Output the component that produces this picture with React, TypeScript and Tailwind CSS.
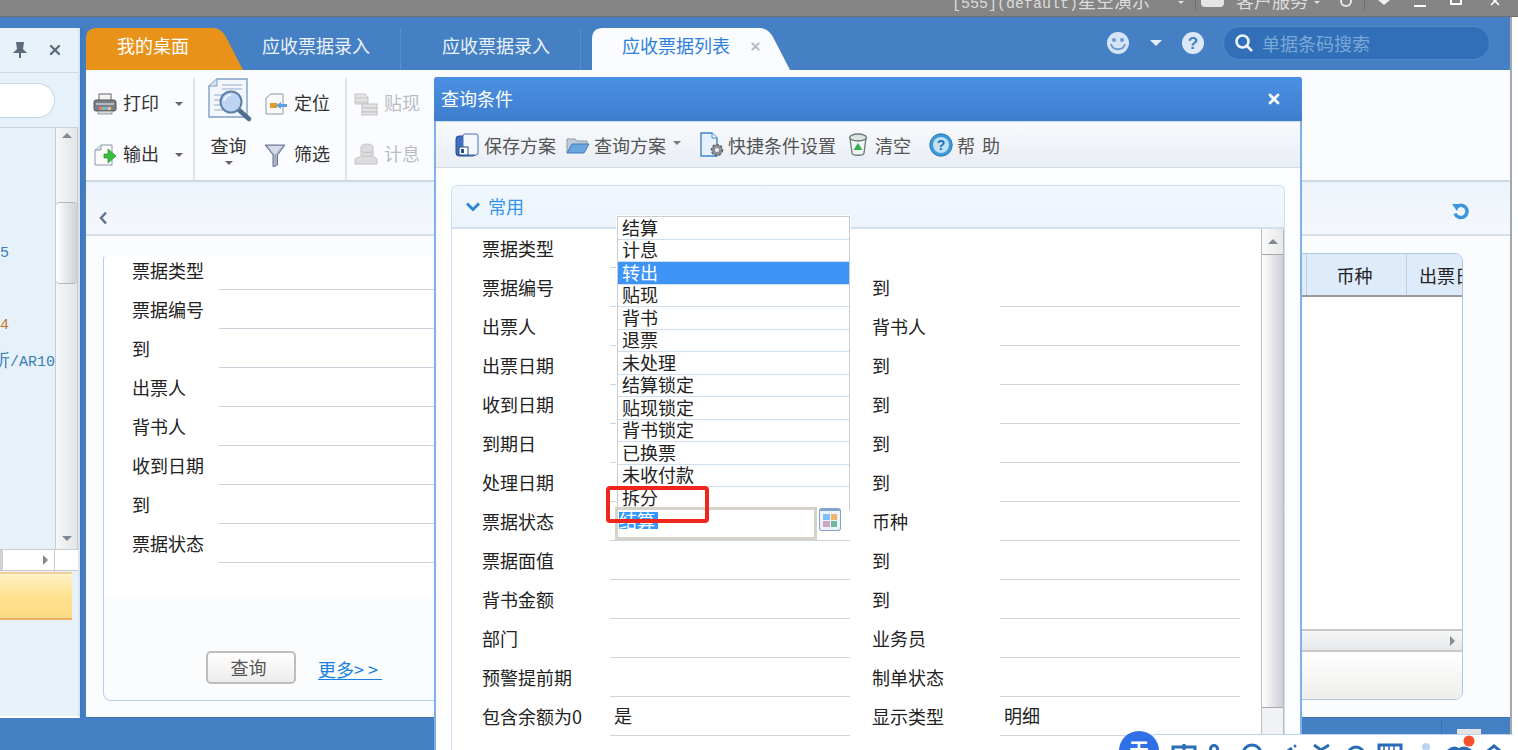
import { X } from "lucide-react"

const formRows = ["票据类型", "票据编号", "到", "出票人", "背书人", "收到日期", "到", "票据状态"]

const dialogRows = [
  { left: "票据类型" },
  { left: "票据编号", right: "到" },
  { left: "出票人", right: "背书人" },
  { left: "出票日期", right: "到" },
  { left: "收到日期", right: "到" },
  { left: "到期日", right: "到" },
  { left: "处理日期", right: "到" },
  { left: "票据状态", right: "币种" },
  { left: "票据面值", right: "到" },
  { left: "背书金额", right: "到" },
  { left: "部门", right: "业务员" },
  { left: "预警提前期", right: "制单状态" },
  { left: "包含余额为0", leftValue: "是", right: "显示类型", rightValue: "明细" },
]

const statusOptions = ["结算", "计息", "转出", "贴现", "背书", "退票", "未处理", "结算锁定", "贴现锁定", "背书锁定", "已换票", "未收付款", "拆分"]

function Caret({ className = "" }: { className?: string }) {
  return <span className={`inline-block w-0 h-0 border-x-[4px] border-x-transparent border-t-[4px] border-t-[#666] ${className}`} />
}

function PrintIcon() {
  return (
    <svg width="24" height="24" viewBox="0 0 24 24">
      <rect x="6" y="2" width="12" height="7" fill="#f4f4f4" stroke="#666" />
      <rect x="1" y="8" width="22" height="11" rx="2" fill="#7b7f86" stroke="#555" />
      <rect x="3" y="11" width="18" height="2" fill="#b6bac0" />
      <rect x="6" y="15" width="3" height="3" fill="#e57f7f" />
      <rect x="9" y="15" width="3" height="3" fill="#7fc48a" />
      <rect x="12" y="15" width="3" height="3" fill="#7fa9e5" />
      <rect x="15" y="15" width="3" height="3" fill="#e5c97f" />
      <rect x="5" y="19" width="14" height="3" fill="#d8dade" stroke="#666" strokeWidth=".6" />
    </svg>
  )
}

function ExportIcon() {
  return (
    <svg width="24" height="24" viewBox="0 0 24 24">
      <path d="M2 22V7l6-5h11v20z" fill="#fbfbfb" stroke="#8a98a8" />
      <path d="M2 7h6V2" fill="#dde5ee" stroke="#8a98a8" />
      <path d="M11 10h4V5l8 7-8 7v-5h-4z" transform="translate(0 1)" fill="#39c03c" stroke="#1f8f28" strokeWidth=".7" />
    </svg>
  )
}

function QueryIcon() {
  return (
    <svg width="46" height="46" viewBox="0 0 46 46">
      <path d="M1 40V9L9 2h30v38z" fill="#f3f7fc" stroke="#7f9fc5" strokeWidth="1.4" />
      <path d="M1 9h8V2" fill="#d6e3f2" stroke="#7f9fc5" />
      <path d="M14 8h20M14 12h20M6 18h10M6 23h8M6 28h8M6 33h10" stroke="#b3c6dc" strokeWidth="1.4" />
      <path d="M31 33l10 9" stroke="#4f6d92" strokeWidth="4.5" strokeLinecap="round" />
      <circle cx="23" cy="25" r="10.5" fill="#bcd3f2" stroke="#5f7fa6" strokeWidth="2" />
      <path d="M16 24a7 7 0 0 1 7-6" stroke="#f3f8ff" strokeWidth="2" fill="none" />
    </svg>
  )
}

function LocateIcon() {
  return (
    <svg width="24" height="24" viewBox="0 0 24 24">
      <path d="M2 22V6l5-4h12v20z" fill="#f7f9fb" stroke="#8c99a8" />
      <rect x="6" y="11" width="7" height="5" fill="#e09a2b" />
      <path d="M12 13.5l5-3.5v2h6v3h-6v2z" fill="#5b9fe0" />
    </svg>
  )
}

function FilterIcon() {
  return (
    <svg width="24" height="24" viewBox="0 0 24 24">
      <path d="M1 2h20L13.5 12v10L9 24V12z" fill="#a9b1c7" stroke="#6a7492" />
      <path d="M4 3h14l-6 8h-2z" fill="#d8dce8" />
    </svg>
  )
}

function DiscountIcon() {
  return (
    <svg width="24" height="24" viewBox="0 0 24 24" fill="#e4e4e4" stroke="#c2c2c2">
      <path d="M1 2h10l3 3v7H1z" />
      <path d="M1 6h13M1 10h13" />
      <rect x="8" y="12" width="15" height="4" />
      <rect x="8" y="16" width="15" height="4" />
      <rect x="8" y="20" width="15" height="3" />
    </svg>
  )
}

function InterestIcon() {
  return (
    <svg width="24" height="24" viewBox="0 0 24 24" fill="#dcdcdc" stroke="#c4c4c4">
      <ellipse cx="13" cy="4" rx="6" ry="3" />
      <path d="M7 4v8c0 2 12 2 12 0V4" />
      <path d="M7 8c0 2 12 2 12 0" fill="none" />
      <path d="M1 16l6-3h12l4 3v5H1z" />
    </svg>
  )
}

function SaveIcon() {
  return (
    <svg width="24" height="24" viewBox="0 0 24 24">
      <rect x="1" y="3" width="20" height="20" rx="3" fill="#3f6fc0" stroke="#294c8c" />
      <rect x="8" y="1" width="15" height="21" rx="2" fill="#f3f6fb" stroke="#4b72b5" />
      <rect x="4" y="14" width="9" height="8" fill="#fff" stroke="#294c8c" />
      <rect x="6" y="16" width="3" height="4" fill="#294c8c" />
    </svg>
  )
}

function FolderIcon() {
  return (
    <svg width="24" height="24" viewBox="0 0 24 24">
      <path d="M1 20V6h8l2 2h10v4H6L1 20z" fill="#c4ccd6" stroke="#8b97a5" />
      <path d="M1 20l5-9h17l-5 9z" fill="#6ba5df" stroke="#3e79b8" />
    </svg>
  )
}

function ShortcutIcon() {
  return (
    <svg width="26" height="26" viewBox="0 0 26 26">
      <path d="M2 24V1h11l5 5v18z" fill="#e6f1fb" stroke="#3f86c6" strokeWidth="1.4" />
      <path d="M13 1v5h5" fill="#fff" stroke="#3f86c6" />
      <circle cx="18" cy="18" r="5.5" fill="#8a8f96" stroke="#60656c" strokeWidth="1.6" strokeDasharray="2.5 1.6" />
      <circle cx="18" cy="18" r="2" fill="#eef1f4" />
    </svg>
  )
}

function ClearIcon() {
  return (
    <svg width="20" height="24" viewBox="0 0 20 24">
      <path d="M2 5l2 15c0 3 12 3 12 0l2-15" fill="#f1f5f3" stroke="#6a7a7a" strokeWidth="1.3" />
      <ellipse cx="10" cy="4.5" rx="8.5" ry="3.5" fill="#dfe5e3" stroke="#6a7a7a" strokeWidth="1.3" />
      <path d="M10 10l4.500 7h-9z" fill="#36b04a" />
    </svg>
  )
}

function HelpIcon() {
  return (
    <svg width="24" height="24" viewBox="0 0 24 24">
      <circle cx="12" cy="12" r="11.200" fill="#3f9ada" stroke="#2678b8" />
      <circle cx="12" cy="12" r="8" fill="#bfe0f5" />
      <text x="12" y="17" textAnchor="middle" fontSize="14" fontWeight="700" fill="#1f70b0" fontFamily="Liberation Sans">?</text>
    </svg>
  )
}

function PinIcon() {
  return (
    <svg width="18" height="18" viewBox="0 0 18 18" fill="#5b6b7c">
      <path d="M5 1h8l-1 7 4 4H2l4-4z" />
      <rect x="8" y="12" width="2" height="5" />
    </svg>
  )
}

function TabShape({ fill, width }: { fill: string; width: number }) {
  return (
    <svg className="absolute inset-0" width={width} height="42" viewBox={`0 0 ${width} 42`}>
      <path d={`M0 42V11Q0 0 11 0H${width - 30}Q${width - 22} 0 ${width - 17} 9L${width} 42Z`} fill={fill} />
    </svg>
  )
}

function ToolItem({ icon, label, muted, caret }: { icon: React.ReactNode; label: string; muted?: boolean; caret?: boolean }) {
  return (
    <div className="flex items-center h-[51px]">
      <span className="w-6 h-6 flex items-center justify-center shrink-0">{icon}</span>
      <span className={`ml-[6px] -mt-[4px] ${muted ? "text-[#b9bdc2]" : "text-[#333]"}`}>{label}</span>
      {caret && <Caret className="ml-4" />}
    </div>
  )
}

function DialogTool({
  icon,
  label,
  labelClass,
  caret,
}: {
  icon: React.ReactNode
  label: string
  labelClass: string
  caret?: boolean
}) {
  return (
    <div className="flex items-center text-[#555] shrink-0">
      {icon}
      <span className={labelClass}>{label}</span>
      {caret && <Caret className="ml-[7px] mb-1 border-t-[#777]" />}
    </div>
  )
}

function ScrollArrow({ dir, className = "" }: { dir: "up" | "down" | "right"; className?: string }) {
  if (dir === "up") return <span className={`w-0 h-0 border-x-[5px] border-x-transparent border-b-[5px] border-b-[#7e8a96] ${className}`} />
  if (dir === "down") return <span className={`w-0 h-0 border-x-[5px] border-x-transparent border-t-[5px] border-t-[#7e8a96] ${className}`} />
  return <span className={`w-0 h-0 border-y-[5px] border-y-transparent border-l-[5px] border-l-[#7e8a96] ${className}`} />
}

function LeftPanel() {
  return (
    <aside className="w-[80px] shrink-0 flex flex-col bg-[#e6f1fa] border-r-2 border-r-[#dfe3e8] border-b-2 border-b-white overflow-hidden">
      <div className="h-[45px] flex items-center border-b border-[#c9d9e8] shrink-0">
        <span className="ml-[11px]"><PinIcon /></span>
        <X size={16} strokeWidth={3.5} className="ml-[18px] text-[#5d6b78]" />
      </div>
      <div className="h-[55px] shrink-0 border-b border-[#c3d2e0] pt-[10px]">
        <div className="w-[55px] h-[35px] bg-white rounded-r-full border border-l-0 border-[#c4d8ec]" />
      </div>
      <div className="h-[421px] shrink-0 flex">
        <div className="w-[55px] overflow-hidden text-[15px] leading-[22px] font-['Liberation_Mono',monospace] text-[#3a7db8] pt-[115px]">
          <div>5</div>
          <div className="mt-[50px] text-[#c9772a]">4</div>
          <div className="mt-[13px] whitespace-nowrap -ml-[8px]"><span className="text-[18px]">析</span>/AR10</div>
        </div>
        <div className="w-[23px] flex flex-col items-center bg-gradient-to-r from-[#f5f6f7] to-[#e4e5e7] border-x border-[#c9cccf]">
          <div className="h-[74px] w-full">
            <ScrollArrow dir="up" className="block mx-auto mt-[5px]" />
          </div>
          <div className="h-[82px] w-full bg-gradient-to-r from-white to-[#cfd1d8] border-y border-[#b5b7bb] rounded-sm" />
          <div className="flex-1" />
          <ScrollArrow dir="down" className="mb-[8px]" />
        </div>
      </div>
      <div className="h-[22px] shrink-0 flex border-y border-[#c9cccf] bg-white">
        <div className="w-[3px] bg-[#d0d2d6]" />
        <div className="w-[52px] flex items-center justify-end pr-[6px] border-r border-[#c9cccf]">
          <ScrollArrow dir="right" />
        </div>
      </div>
      <div className="h-[48px] w-[72px] shrink-0 mt-[1px] bg-gradient-to-b from-[#fff3c8] via-[#ffe18e] to-[#fbdc85] border-y-2 border-t-[#f6cf96] border-b-[#efb366]" />
    </aside>
  )
}

function QueryCard() {
  return (
    <div className="w-[347px] h-[446px] shrink-0 rounded-bl-lg rounded-tl border border-r-0 border-[#b5d0ec] border-t-transparent bg-[#fbfcfe] overflow-hidden">
      <div className="bg-white pl-[28px] h-[345px] -mt-[5px]">
        {formRows.map((label, i) => (
          <div key={i} className="flex h-[39px] text-[#222]">
            <span className="w-[87px] shrink-0 flex items-center pb-[2px]">{label}</span>
            <div className="flex-1 border-b border-[#c9d1da]" />
          </div>
        ))}
      </div>
      <div className="flex items-center mt-[55px] ml-[102px]">
        <button className="w-[90px] h-[33px] rounded-[5px] border-2 border-[#bdbdbd] bg-gradient-to-b from-white to-[#ececec] text-[#555] pb-[2px] pr-[5px]">查询</button>
        <a className="ml-[22px] mt-[2px] text-[#1a80e0] underline underline-offset-2">
          更多<span className="tracking-[4px]">&gt;&gt;</span>
        </a>
      </div>
    </div>
  )
}

function GridPanel() {
  return (
    <div className="flex-1 h-[447px] -mt-[2px] ml-[2px] flex flex-col rounded-r-lg border border-[#a9c8e8] overflow-hidden">
      <div className="h-[43px] shrink-0 flex justify-end bg-[#deebfa] border-b-2 border-b-[#9a9a9a] text-[#222]">
        <div className="w-[100px] flex items-center justify-center pr-[4px] border-l border-[#bfcfe0]">币种</div>
        <div className="w-[56px] flex items-center pl-[12px] border-l border-[#bfcfe0] whitespace-nowrap overflow-hidden">出票日期</div>
      </div>
      <div className="flex-1 bg-white" />
      <div className="h-[23px] shrink-0 flex items-center justify-end pr-[7px] bg-gradient-to-b from-[#f6f6f6] to-[#e6e8ea] border-y-2 border-[#c8c8c8]">
        <ScrollArrow dir="right" />
      </div>
      <div className="h-[47px] shrink-0 bg-gradient-to-b from-white to-[#eeeeec]" />
    </div>
  )
}

function MainToolbar() {
  return (
    <div className="h-[112px] shrink-0 flex bg-[#fafcff] border-b-2 border-[#cbd8e5] pt-[8px]">
      <div className="w-[109px] shrink-0 pl-[7px] border-r-2 border-[#dfe4ea] h-[102px]">
        <ToolItem icon={<PrintIcon />} label="打印" caret />
        <ToolItem icon={<ExportIcon />} label="输出" caret />
      </div>
      <div className="w-[69px] shrink-0 flex flex-col items-center -mt-px">
        <span className="ml-[3px]"><QueryIcon /></span>
        <span className="mt-[11px] mr-[2px] text-[#333] leading-[22px]">查询</span>
        <Caret className="mt-[5px] mr-[2px]" />
      </div>
      <div className="w-[83px] shrink-0 border-r-2 border-[#dfe4ea] h-[102px]">
        <ToolItem icon={<LocateIcon />} label="定位" />
        <ToolItem icon={<FilterIcon />} label="筛选" />
      </div>
      <div className="pl-[7px]">
        <ToolItem icon={<DiscountIcon />} label="贴现" muted />
        <ToolItem icon={<InterestIcon />} label="计息" muted />
      </div>
    </div>
  )
}

function QueryDialog() {
  const selected = "转出"
  return (
    <div className="absolute left-[434px] top-[77px] w-[868px] h-[700px] flex flex-col rounded-t-[3px] border-2 border-t-0 border-[#7fb0e8] bg-[#fbfdff]">
      <div className="h-[44px] shrink-0 -mx-[2px] rounded-t-[3px] flex items-center justify-between px-[7px] bg-gradient-to-b from-[#4a90e2] to-[#3e7ecf] text-white">
        <span className="pb-[2px]">查询条件</span>
        <X size={16} strokeWidth={4} className="mr-[13px]" />
      </div>
      <div className="h-[47px] shrink-0 flex items-center pl-[19px] bg-gradient-to-b from-[#f8fafc] to-[#e9eef5] border-y border-y-[#cfdbe8]">
        <DialogTool icon={<SaveIcon />} label="保存方案" labelClass="ml-[5px]" />
        <div className="w-[10px]" />
        <DialogTool icon={<FolderIcon />} label="查询方案" labelClass="ml-[4px]" caret />
        <div className="w-[18px]" />
        <DialogTool icon={<ShortcutIcon />} label="快捷条件设置" labelClass="ml-[3px]" />
        <div className="w-[12px]" />
        <DialogTool icon={<ClearIcon />} label="清空" labelClass="ml-[7px]" />
        <div className="w-[18px]" />
        <DialogTool icon={<HelpIcon />} label="帮 助" labelClass="ml-[4px] [word-spacing:3px]" />
      </div>

      <div className="mt-[17px] mx-[15px] flex-1 flex flex-col rounded-t-md border border-b-0 border-[#cfdeec]">
        <div className="h-[43px] shrink-0 flex items-center pl-[14px] bg-gradient-to-b from-[#f1f7fe] to-[#edf4fb] border-b-2 border-[#d3dfea] rounded-t-md">
          <svg width="14" height="10" viewBox="0 0 14 10"><path d="M1 1.500l6 6 6-6" fill="none" stroke="#2f86d8" strokeWidth="3" /></svg>
          <span className="ml-[8px] pb-[2px] text-[#3595ea]">常用</span>
        </div>
        <div className="flex-1 flex bg-white">
          <div className="flex-1 pl-[30px] pr-[20px]">
            {dialogRows.map((row, i) => (
              <div key={i} className="flex h-[39px] text-[#222]">
                <span className="w-[128px] shrink-0 flex items-center pb-[2px] whitespace-nowrap">{row.left}</span>
                <div className="w-[240px] shrink-0 flex items-center pl-[4px] pb-[2px] border-b border-[#cdd5dd]">{row.leftValue}</div>
                {row.right && <span className="w-[22px] shrink-0 ml-[22px] flex items-center pb-[2px] whitespace-nowrap">{row.right}</span>}
                {row.right && <div className="w-[240px] shrink-0 flex items-center pl-[4px] pb-[2px] ml-[106px] border-b border-[#cdd5dd]">{row.rightValue}</div>}
              </div>
            ))}
          </div>
          <div className="w-[23px] shrink-0 flex flex-col bg-[#f0f2f4] border-x border-[#b9bdc2]">
            <div className="h-[25px] flex items-center justify-center bg-gradient-to-r from-[#fbfbfb] to-[#e6e7ea]">
              <ScrollArrow dir="up" />
            </div>
            <div className="h-[454px] bg-gradient-to-r from-white to-[#cdced6] border-y border-[#a8a8a8]" />
          </div>
        </div>
      </div>

      {/* dropdown list over the form */}
      <div className="absolute left-[181px] top-[139px] w-[233px] bg-white border border-[#c9ccd0] border-b-0 shadow-[0_0_0_1px_#fff]">
        {statusOptions.map((opt, i) => (
          <div
            key={opt}
            className={`h-[22.5px] flex items-center pl-[4px] pb-[2px] leading-none ${
              i < statusOptions.length - 1 ? "border-b border-[#cfdfee]" : ""
            } ${opt === selected ? "bg-[#3e94f5] text-white" : "text-[#222]"}`}
          >
            {opt}
          </div>
        ))}
      </div>

      {/* status input being edited */}
      <div className="absolute left-[179px] top-[430px] flex">
        <div className="w-[202px] h-[33px] bg-white border-[3px] border-[#d6d2c8] pl-[1px] pt-[2px] overflow-hidden">
          <span className="block w-[39px] h-[17px] leading-[17px] overflow-hidden bg-[#3399ff] text-white">结算</span>
        </div>
        <div className="ml-[2px] mt-px w-[22px] h-[23px] rounded-[3px] border border-[#7fa3cc] border-t-[3px] bg-[#eef3f9] grid grid-cols-2 gap-px p-[3px]">
          <span className="bg-[#7cc0f5]" />
          <span className="bg-[#f2b36b]" />
          <span className="bg-[#cfa5c0]" />
          <span className="bg-[#6fb9a0]" />
        </div>
      </div>

      {/* red highlight from the annotated screenshot */}
      <div className="absolute left-[170px] top-[409px] w-[103px] h-[37px] border-4 border-[#f0261c] rounded-[4px]" />
    </div>
  )
}

function Tray() {
  return (
    <div className="absolute left-[1119px] top-[731px] w-[394px] h-[19px] overflow-hidden">
      <div className="absolute left-[34px] top-[3px] right-0 bottom-0 bg-white border-t border-[#bcd4ee]" />
      <div className="absolute left-0 top-0 w-[40px] h-[40px] rounded-full bg-[#2f6fe8] flex justify-center text-white text-[20px] font-bold leading-[38px]">
        天
      </div>
      <svg className="absolute left-[40px] top-[2px]" width="354" height="17" viewBox="0 0 354 17" fill="none" stroke="#2a6cb8" strokeWidth="3">
        <path d="M25 11v6M14 17V14h22v3" />
        <circle cx="55" cy="16" r="3.500" />
        <circle cx="93" cy="21" r="9" />
        <path d="M126 20l7-5" />
        <circle cx="136" cy="13" r="1.500" fill="#2a6cb8" stroke="none" />
        <path d="M155 12l7 5 8-5" />
        <circle cx="197" cy="22" r="8" />
        <rect x="220" y="12" width="22" height="10" fill="#fff" />
        <path d="M225 12v5M230 12v5M235 12v5" strokeWidth="1.500" />
        <circle cx="267" cy="14" r="4" fill="#bcd4f5" stroke="none" />
        <path d="M288 17q6-6 12-2q6-4 13 2v3h-25z" fill="#2a6cb8" stroke="none" />
        <circle cx="310" cy="8" r="5.500" fill="#f5502b" stroke="none" />
        <path d="M325 21l10-8 10 8" />
      </svg>
    </div>
  )
}

export default function App() {
  return (
    <div className="relative w-[1518px] h-[750px] overflow-hidden flex flex-col bg-white font-['Noto_Sans_CJK_SC','Liberation_Sans',sans-serif] text-[18px] leading-none">
      <div className="h-[17px] shrink-0 bg-[#858585] border-b border-[#6f6f6f] relative overflow-hidden flex justify-end text-[#dcdcdc] font-['Liberation_Mono','Noto_Sans_CJK_SC',monospace]">
        <div className="flex items-center h-[5px] mr-[16px] text-[15px]">
          <span className="whitespace-nowrap">[555](default)<span className="text-[18px]">星空演示</span></span>
          <span className="ml-[28px] w-0 h-0 border-x-[3px] border-x-transparent border-t-[3px] border-t-[#ddd]" />
          <span className="ml-[11px] h-[16px] border-l border-[#6f6f6f]" />
          <span className="ml-[5px] w-[23px] h-[8px] bg-[#e5e5e5] rounded-b" />
          <span className="ml-[12px] text-[18px] whitespace-nowrap">客户服务</span>
          <span className="ml-[6px] w-0 h-0 border-x-[3px] border-x-transparent border-t-[3px] border-t-[#ddd]" />
          <span className="ml-[20px] w-[12px] h-[8px] border-2 border-t-0 border-[#e5e5e5] rounded-b-full" />
          <span className="ml-[12px] h-[16px] border-l border-[#6f6f6f]" />
          <span className="ml-[13px] w-0 h-0 border-x-[6px] border-x-transparent border-t-[5px] border-t-[#eee]" />
          <span className="ml-[24px] mt-[6px] w-[12px] h-[2px] bg-white" />
          <span className="ml-[24px] w-[12px] h-[5px] border-2 border-t-0 border-white" />
          <X size={14} strokeWidth={3} className="ml-[26px] -mt-[4px] text-white" />
        </div>
      </div>

      <div className="flex-1 flex min-h-0">
        <div className="w-[1510px] shrink-0 flex pt-[11px] pb-[32px] bg-[#4580c4]">
          <LeftPanel />
          <div className="w-[6px] shrink-0 bg-gradient-to-r from-[#3b78bf] to-[#4580c4]" />
          <div className="flex-1 flex flex-col min-w-0">
            <div className="h-[42px] shrink-0 flex relative">
              <div className="relative w-[157px] shrink-0 pl-[31px] pt-[8px] text-white">
                <TabShape fill="#e8921a" width={157} />
                <span className="relative">我的桌面</span>
              </div>
              <div className="w-[158px] shrink-0 pl-[19px] pt-[8px] text-[#eaf2fb] border-r border-[#5a90cf]">应收票据录入</div>
              <div className="w-[180px] shrink-0 pl-[41px] pt-[8px] text-[#eaf2fb] border-r border-[#5a90cf]">应收票据录入</div>
              <div className="relative w-[198px] ml-[11px] shrink-0 pl-[30px] pt-[8px] text-[#2f80d8] flex">
                <TabShape fill="#fafcff" width={198} />
                <span className="relative">应收票据列表</span>
                <X size={13} strokeWidth={3.500} className="relative ml-[19px] mt-[4px] text-[#b4bcc6]" />
              </div>
              <div className="ml-auto mr-[20px] -mt-[2px] h-[34px] self-start flex items-center">
                <svg width="24" height="24" viewBox="0 0 24 24">
                  <circle cx="12" cy="12" r="11" fill="#d6e4f7" />
                  <circle cx="8" cy="9" r="2" fill="#6f9ad0" />
                  <circle cx="16" cy="9" r="2" fill="#6f9ad0" />
                  <path d="M5 13c2 7 12 7 14 0" fill="none" stroke="#6f9ad0" strokeWidth="1.800" />
                </svg>
                <span className="ml-[20px] w-0 h-0 border-x-[6px] border-x-transparent border-t-[6px] border-t-[#e4edf8]" />
                <svg className="ml-[19px]" width="24" height="24" viewBox="0 0 24 24">
                  <circle cx="12" cy="12" r="11" fill="#dce8f8" />
                  <text x="12" y="18" textAnchor="middle" fontSize="17" fontWeight="700" fill="#4580c4" fontFamily="Liberation Sans">?</text>
                </svg>
                <div className="ml-[18px] w-[267px] h-[34px] rounded-full bg-[#3170b8] border border-[#4d88ca] flex items-center pl-[10px] text-[#7ba7d8]">
                  <svg width="20" height="20" viewBox="0 0 20 20" fill="none" stroke="#f0f5fb" strokeWidth="2.500">
                    <circle cx="8.500" cy="8.500" r="6" />
                    <path d="M13 13l5 5" />
                  </svg>
                  <span className="ml-[8px]">单据条码搜索</span>
                </div>
              </div>
            </div>

            <div className="flex-1 flex flex-col bg-[#fbfcfe] min-h-0 border-b border-[#3a70b4]">
              <MainToolbar />
              <div className="h-[54px] shrink-0 flex items-center justify-between px-[12px] bg-gradient-to-b from-[#edf3fb] to-[#f5f8fd] border-b-2 border-[#d3dfea]">
                <svg className="mt-[20px]" width="10" height="14" viewBox="0 0 10 14"><path d="M8 1.500L3 7l5 5.500" fill="none" stroke="#5d7690" strokeWidth="2.500" /></svg>
                <svg className="mr-[29px] mt-[8px]" width="18" height="18" viewBox="0 0 18 18" fill="none">
                  <path d="M5 4.500a6.200 6.200 0 1 1-1 6" stroke="#3c96dc" strokeWidth="3.500" />
                  <path d="M1 1l8 0-3 7z" fill="#3c96dc" />
                </svg>
              </div>
              <div className="flex-1 flex pt-[19px] pl-[17px] pr-[47px]">
                <QueryCard />
                <GridPanel />
              </div>
            </div>
          </div>
        </div>
        <div className="flex-1 border-l-2 border-[#a3a8ad] bg-white" />
      </div>

      <QueryDialog />
      {/* status bar remnants peeking out above the tray */}
      <div className="absolute left-[1441px] top-[718px] h-[16px] border-l border-[#3a70b4]" />
      <div className="absolute left-[1457px] top-[729px] w-[24px] h-[5px] bg-[#e4e4e4]" />
      <Tray />
    </div>
  )
}
